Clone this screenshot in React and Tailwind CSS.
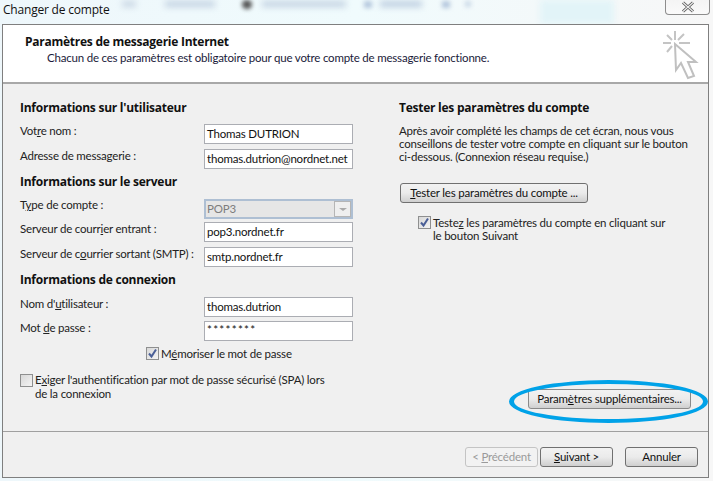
const FONT = { fontFamily: 'Lato, "Open Sans", sans-serif' };
const BOLD = { fontFamily: '"Open Sans", sans-serif' };

function Heading({ children, className = "" }) {
  return <div style={BOLD} className={"text-[12px] leading-[16px] font-bold tracking-[-0.25px] text-[#111] whitespace-nowrap " + className}>{children}</div>;
}

function Label({ children, className = "-mt-[1px]" }) {
  return <div className={"w-[184px] text-[11.5px] leading-[16px] tracking-[-0.2px] text-[#222] whitespace-nowrap " + className}>{children}</div>;
}

function Field({ label, value, mt = "mt-[5px]", valueClass = "" }) {
  return (
    <div className={"flex items-start " + mt}>
      <Label>{label}</Label>
      <div className={"w-[149px] h-[20px] bg-white border border-[#abadb3] px-[2px] text-[11.5px] leading-[18px] tracking-[-0.2px] text-[#111] whitespace-nowrap overflow-hidden " + valueClass}>{value}</div>
    </div>
  );
}

function Check({ checked }) {
  return (
    <span className="w-[13px] h-[13px] shrink-0 border border-[#8e8f8f] bg-gradient-to-br from-[#d8d8d8] to-[#f4f4f4] flex items-center justify-center">
      {checked && (
        <svg width="11" height="11" viewBox="0 0 11 11">
          <path d="M2 5.5 L4.5 8.5 L9 1.5" fill="none" stroke="#4a5f97" strokeWidth="2" />
        </svg>
      )}
    </span>
  );
}

function Btn({ children, className = "", disabled }) {
  return (
    <div className={"h-[20px] flex items-center justify-center rounded-[3px] border text-[11.5px] tracking-[-0.2px] leading-none whitespace-nowrap " + (disabled ? "border-[#c4c4c4] bg-[#f2f2f2] text-[#9a9a9a] " : "border-[#707070] bg-gradient-to-b from-[#f2f2f2] via-[#ebebeb] to-[#cfcfcf] text-[#111] ") + className}>
      {children}
    </div>
  );
}

export default function App() {
  return (
    <div style={FONT} className="relative w-[713px] h-[481px] overflow-hidden bg-gradient-to-r from-[#eef7fb] via-[#f0fbfd] to-[#f7f7f7]">
      {/* blurred desktop behind the glass title bar */}
      <div className="absolute left-[122px] top-[1px] w-[14px] h-[6px] bg-[#c9d6e4] blur-[3px]" />
      <div className="absolute left-[165px] top-[1px] w-[50px] h-[6px] bg-[#c3d2e2] blur-[3px]" />
      <div className="absolute left-[242px] top-[0px] w-[10px] h-[9px] rounded-full bg-[#555] blur-[2px]" />
      <div className="absolute left-[262px] top-[1px] w-[84px] h-[6px] bg-[#c3d2e2] blur-[3px]" />
      <div className="absolute left-[364px] top-[1px] w-[8px] h-[7px] bg-[#b5c8de] blur-[2px]" />
      <div className="absolute left-[380px] top-[1px] w-[42px] h-[6px] bg-[#bccde0] blur-[3px]" />
      <div className="absolute left-[442px] top-[1px] w-[8px] h-[7px] bg-[#b5c8de] blur-[2px]" />
      <div className="absolute left-[465px] top-[1px] w-[6px] h-[6px] bg-[#ccdae8] blur-[2px]" />
      <div className="absolute left-[540px] top-[0px] w-[74px] h-[24px] bg-[#e2f4f8] blur-[3px]" />

      <div className="relative flex flex-col h-full">
        <div className="h-[24px] shrink-0 flex items-start justify-between pl-[3px] pr-[3px]">
          <span style={BOLD} className="text-[12px] leading-[20px] tracking-[-0.2px] text-[#111]">Changer de compte</span>
          <div className="w-[45px] h-[15px] border border-t-0 border-[#8d8d8d] rounded-b-[4px] bg-gradient-to-b from-[#f4f4f4] to-[#fafafa] flex items-center justify-center">
            <svg width="14" height="12" viewBox="0 0 14 12">
              <path d="M2 1.5 L12 10.5 M12 1.5 L2 10.5" stroke="#555" strokeWidth="3" />
              <path d="M2 1.5 L12 10.5 M12 1.5 L2 10.5" stroke="#eee" strokeWidth="1.2" />
            </svg>
          </div>
        </div>

        <div className="ml-[2px] w-[707px] h-[454px] border border-[#7f7f7f] bg-[#f0f0f0] flex flex-col">
          <div className="h-[59px] shrink-0 bg-white border-b-2 border-[#a8a8a8] pl-[22px] pt-[9px] flex justify-between">
            <div>
              <div style={BOLD} className="text-[12px] leading-[16px] font-bold tracking-[-0.25px] text-[#111] whitespace-nowrap">Paramètres de messagerie Internet</div>
              <div className="text-[11.5px] leading-[16px] tracking-[-0.2px] pl-[22px] text-[#1a1a3a] whitespace-nowrap">Chacun de ces paramètres est obligatoire pour que votre compte de messagerie fonctionne.</div>
            </div>
            <svg width="36" height="52" viewBox="0 0 36 52" className="mr-[9px] -mt-[4px] shrink-0" fill="none">
              <g stroke="#c4c4c4" strokeWidth="2">
                <path d="M12 1 L12 10 M0 13 L8 13 M16 13 L27 13 M4 5 L9 10 M21 4 L15 10 M4 22 L9 16" />
              </g>
              <path d="M12 14 L33 32 L25 32 L31 46 L25 48 L18 33 L13 40 Z" fill="#fff" stroke="#c0c0c0" strokeWidth="2" />
            </svg>
          </div>

          <div className="h-[347px] shrink-0 flex relative">
            <div className="w-[370px] shrink-0 pl-[17px] pt-[16px]">
              <Heading>Informations sur l'utilisateur</Heading>
              <Field mt="mt-[8px]" label={<>Vot<u>r</u>e nom :</>} value="Thomas DUTRION" />
              <Field label={<>Adresse de messa<u>g</u>erie :</>} value="thomas.dutrion@nordnet.net" />
              <Heading className="mt-[5px]">Informations sur le serveur</Heading>
              <div className="flex items-start mt-[9px]">
                <Label className="-mt-[2px]">T<u>y</u>pe de compte :</Label>
                <div className="w-[149px] h-[20px] border-2 border-[#aebfd3] bg-[#e6e6e6] flex items-center justify-between pl-[1px] text-[11.5px] tracking-[-0.2px] text-[#7d7d7d]">
                  POP3
                  <span className="w-[17px] h-[16px] border border-[#b5b5b5] bg-[#efefef] flex items-center justify-center">
                    <span className="border-x-[4px] border-x-transparent border-t-[3px] border-t-[#aaa]" />
                  </span>
                </div>
              </div>
              <Field mt="mt-[3px]" label={<>Serveur de courr<u>i</u>er entrant :</>} value="pop3.nordnet.fr" />
              <Field label={<>Serveur de c<u>o</u>urrier sortant (SMTP) :</>} value="smtp.nordnet.fr" />
              <Heading className="mt-[5px]">Informations de connexion</Heading>
              <Field mt="mt-[9px]" label={<>Nom d'<u>u</u>tilisateur :</>} value="thomas.dutrion" />
              <Field mt="mt-[4px]" valueClass="!tracking-[1.3px] !leading-[15px]" label={<>Mot <u>d</u>e passe :</>} value="********" />
              <div className="flex items-center mt-[6px] pl-[126px] gap-[2px] h-[13px] text-[11.5px] tracking-[-0.2px] text-[#222] whitespace-nowrap">
                <Check checked />
                <span>M<u>é</u>moriser le mot de passe</span>
              </div>
              <div className="flex items-start mt-[13px] gap-[2px] text-[11.5px] tracking-[-0.2px] leading-[14px] text-[#222]">
                <span className="mt-[1px]"><Check /></span>
                <span className="whitespace-nowrap">E<u>x</u>iger l'authentification par mot de passe sécurisé (SPA) lors<br />de la connexion</span>
              </div>
            </div>

            <div className="flex-1 pl-[26px] pt-[16px]">
              <Heading>Tester les paramètres du compte</Heading>
              <div className="mt-[8px] text-[11.5px] tracking-[-0.2px] leading-[13px] text-[#222] whitespace-nowrap">
                Après avoir complété les champs de cet écran, nous vous<br />conseillons de tester votre compte en cliquant sur le bouton<br />ci-dessous. (Connexion réseau requise.)
              </div>
              <Btn className="mt-[20px] ml-[1px] w-[188px]"><span><u>T</u>ester les paramètres du compte ...</span></Btn>
              <div className="mt-[13px] ml-[19px] flex items-start gap-[2px] text-[11.5px] tracking-[-0.2px] leading-[13px] text-[#222]">
                <span className="mt-[0px]"><Check checked /></span>
                <span className="whitespace-nowrap">Teste<u>z</u> les paramètres du compte en cliquant sur<br />le bouton Suivant</span>
              </div>
            </div>

            <div className="absolute left-[525px] top-[305px]">
              <Btn className="w-[163px] !border-[#8a8a8a]"><span>Param<u>è</u>tres supplémentaires...</span></Btn>
              <div className="absolute -left-[19px] -top-[9px] w-[199px] h-[43px] rounded-[50%] border-x-[5px] border-y-[4px] border-[#00a2e8]" />
            </div>
          </div>

          <div className="flex-1 border-t border-[#a0a0a0] flex items-start justify-end pt-[15px] pr-[10px]">
            <Btn disabled className="w-[73px]"><span>&lt; <u>P</u>récédent</span></Btn>
            <Btn className="w-[73px] ml-[2px]"><span><u>S</u>uivant &gt;</span></Btn>
            <Btn className="w-[73px] ml-[12px]"><span>Annuler</span></Btn>
          </div>
        </div>
      </div>
    </div>
  );
}
